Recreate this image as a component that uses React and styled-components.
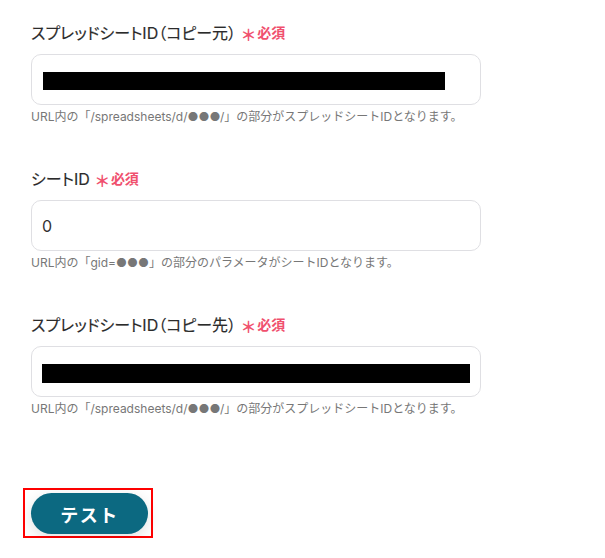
import React from "react";
import styled, { createGlobalStyle } from "styled-components";

const Global = createGlobalStyle`
  html, body { margin: 0; padding: 0; background: #fff; }
  body { font-family: "Inter", "Noto Sans CJK JP", sans-serif; color: #333; }
`;

const Page = styled.div`
  padding: 21px 0 0 31px;
  width: 450px;
`;

const Field = styled.div`
  display: flex;
  flex-direction: column;
  margin-bottom: 41px;
`;

const Label = styled.div`
  display: flex;
  align-items: center;
  height: 22px;
  font-family: "Inter", "Noto Sans CJK JP", sans-serif;
  font-feature-settings: "palt";
  font-size: 16px;
  font-weight: 400;
  color: #2b2b2b;
  margin-bottom: 11px;
  -webkit-text-stroke: 0.15px #2b2b2b;
`;

const Required = styled.span`
  color: #f0506e;
  font-family: "Noto Sans CJK JP", sans-serif;
  font-size: 14px;
  font-weight: 700;
  margin-left: 6px;
  display: inline-flex;
  align-items: center;
  gap: 2px;
  -webkit-text-stroke: 0;
`;

const Star = styled.span`
  font-size: 16px;
  line-height: 1;
  font-weight: 700;
  position: relative;
  top: 2px;
`;

const InputBox = styled.div`
  box-sizing: border-box;
  height: 51px;
  border: 1px solid #dfdfe3;
  border-radius: 10px;
  display: flex;
  align-items: center;
  padding-left: ${(p) => p.$pad || 11}px;
  font-size: 16px;
  color: #333;
`;

const Redacted = styled.div`
  height: ${(p) => p.$h}px;
  width: ${(p) => p.$w}px;
  background: #000;
  margin-top: ${(p) => p.$mt || 0}px;
`;

const Help = styled.div`
  margin-top: 3px;
  height: 18px;
  line-height: 18px;
  font-size: 12px;
  color: #777;
`;

const ButtonArea = styled.div`
  padding-top: 29px;
  margin-left: -8px;
`;

const Highlight = styled.div`
  display: inline-flex;
  border: 2px solid #ff0000;
  padding: 3px 3px 2px 6px;
`;

const Button = styled.button`
  width: 117px;
  height: 41px;
  border: none;
  border-radius: 21px;
  background: #0c6981;
  color: #fff;
  font-family: "Noto Sans CJK JP", sans-serif;
  font-size: 18px;
  font-weight: 700;
  letter-spacing: 1.5px;
  box-shadow: 0 4px 14px rgba(0, 0, 0, 0.12);
  cursor: pointer;
`;

const fields = [
  {
    label: "スプレッドシートID（コピー元）",
    content: <Redacted $w={402} $h={18} $mt={2} />,
    pad: 11,
    help: "URL内の「/spreadsheets/d/●●●/」の部分がスプレッドシートIDとなります。",
  },
  {
    label: "シートID",
    content: "0",
    pad: 10,
    help: "URL内の「gid=●●●」の部分のパラメータがシートIDとなります。",
  },
  {
    label: "スプレッドシートID（コピー先）",
    content: <Redacted $w={428} $h={19} $mt={3} />,
    pad: 10,
    help: "URL内の「/spreadsheets/d/●●●/」の部分がスプレッドシートIDとなります。",
  },
];

export default function App() {
  return (
    <>
      <Global />
      <Page>
        {fields.map((f, i) => (
          <Field key={i}>
            <Label>
              {f.label}
              <Required>
                <Star>＊</Star>必須
              </Required>
            </Label>
            <InputBox $pad={f.pad}>{f.content}</InputBox>
            <Help>{f.help}</Help>
          </Field>
        ))}
        <ButtonArea>
          <Highlight>
            <Button>テスト</Button>
          </Highlight>
        </ButtonArea>
      </Page>
    </>
  );
}
